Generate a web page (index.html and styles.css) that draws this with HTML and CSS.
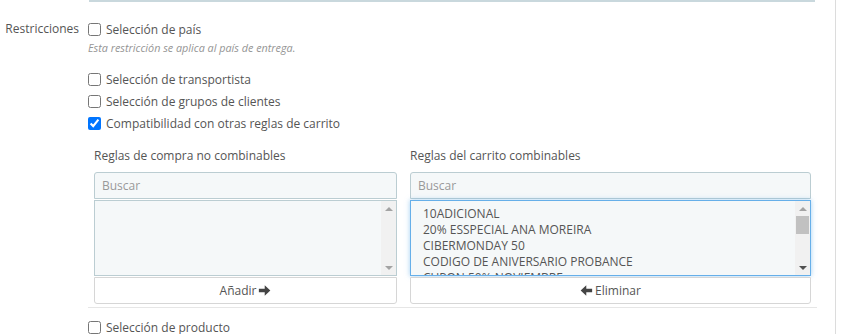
FILE: index.html
```html
<!DOCTYPE html>
<html lang="es">
<head>
  <meta charset="UTF-8" />
  <meta name="viewport" content="width=device-width, initial-scale=1.0" />
  <title>Restricciones</title>
  <link rel="stylesheet" href="styles.css">
</head>
<body>
  <div class="panel">
    <div class="top-rule"></div>

    <div class="form-group">
      <label class="control-label">Restricciones</label>
      <div class="controls">
        <label class="check"><input type="checkbox"> Selección de país</label>
        <p class="help">Esta restricción se aplica al país de entrega.</p>

        <label class="check first"><input type="checkbox"> Selección de transportista</label>
        <label class="check"><input type="checkbox"> Selección de grupos de clientes</label>
        <label class="check"><input type="checkbox" checked> Compatibilidad con otras reglas de carrito</label>

        <div class="rules">
          <div class="rule-col left">
            <div class="col-title">Reglas de compra no combinables</div>
            <input type="text" class="search" placeholder="Buscar">
            <div class="listbox">
              <div class="items"></div>
              <div class="scrollbar">
                <span class="arrow up"></span>
                <span class="track"></span>
                <span class="arrow down"></span>
              </div>
            </div>
            <button class="move">Añadir
              <svg class="ico" viewBox="0 0 12 12" width="13" height="13"><path d="M0.8 4.4h5.4V1.2L11.4 6 6.2 10.8V7.6H0.8z"/></svg>
            </button>
          </div>

          <div class="rule-col right">
            <div class="col-title">Reglas del carrito combinables</div>
            <input type="text" class="search" placeholder="Buscar">
            <div class="listbox focused">
              <div class="items">
                <div>10ADICIONAL</div>
                <div>20% ESSPECIAL ANA MOREIRA</div>
                <div>CIBERMONDAY 50</div>
                <div>CODIGO DE ANIVERSARIO PROBANCE</div>
                <div>CUPON 50% NOVIEMBRE</div>
              </div>
              <div class="scrollbar">
                <span class="arrow up"></span>
                <span class="track"><span class="thumb"></span></span>
                <span class="arrow down dark"></span>
              </div>
            </div>
            <button class="move">
              <svg class="ico" viewBox="0 0 12 12" width="13" height="13"><path d="M11.2 4.4H5.8V1.2L0.6 6 5.8 10.8V7.6H11.2z"/></svg>
              Eliminar</button>
          </div>
        </div>

        <label class="check product"><input type="checkbox"> Selección de producto</label>
      </div>
    </div>
  </div>
</body>
</html>
```

FILE: styles.css
```css
body {
  margin: 0;
  font-family: "Open Sans", "Noto Sans", sans-serif;
  font-size: 12px;
  color: #555;
  background: #fff;
}
.panel {
  width: 835px;
  height: 334px;
  border-right: 1px solid #dcdcdc;
  overflow: hidden;
}
.top-rule {
  margin-left: 89px;
  width: 726px;
  height: 2px;
  background: #c9d8dd;
}
.form-group {
  display: flex;
  padding-top: 16px;
}
.control-label {
  width: 79px;
  padding-right: 9px;
  text-align: right;
  font-size: 12px;
  line-height: 22px;
  flex: none;
}
.controls {
  width: 729px;
}
.check {
  display: flex;
  align-items: center;
  height: 22px;
  gap: 5px;
  cursor: pointer;
}
.check input {
  margin: 0;
  width: 13px;
  height: 13px;
}
.check.first {
  margin-top: 12px;
}
.help {
  margin: 0;
  line-height: 16px;
  font-size: 10.8px;
  font-style: italic;
  color: #959595;
}
.rules {
  display: grid;
  grid-template-columns: 303px 401px;
  column-gap: 13px;
  padding: 13px 0 3px 6px;
  border-bottom: 1px solid #e6e6e6;
}
.col-title {
  line-height: 18px;
  margin-bottom: 7px;
}
.search {
  display: block;
  width: 100%;
  height: 27px;
  box-sizing: border-box;
  margin: 0;
  padding: 0 7px;
  border: 1px solid #bbcdd2;
  border-radius: 3px 3px 0 0;
  background: #f5f8f9;
  font-family: inherit;
  font-size: 12px;
  color: #555;
}
.search::placeholder {
  color: #999;
}
.listbox {
  display: flex;
  height: 76px;
  margin-top: 1px;
  box-sizing: border-box;
  border: 1px solid #bbcdd2;
  background: #f5f8f9;
  overflow: hidden;
}
.listbox.focused {
  border-color: #66afe9;
  box-shadow: 0 0 5px rgba(102, 175, 233, 0.6);
}
.items {
  flex: 1;
  padding: 5px 12px;
  line-height: 16px;
  overflow: hidden;
  white-space: nowrap;
}
.scrollbar {
  width: 15px;
  flex: none;
  display: flex;
  flex-direction: column;
  background: #f1f1f1;
}
.arrow {
  height: 15px;
  display: flex;
  align-items: center;
  justify-content: center;
}
.arrow::before {
  content: "";
  border-left: 4px solid transparent;
  border-right: 4px solid transparent;
}
.arrow.up::before {
  border-bottom: 4px solid #a3a3a3;
}
.arrow.down::before {
  border-top: 4px solid #a3a3a3;
}
.arrow.down.dark::before {
  border-top-color: #505050;
}
.track {
  flex: 1;
  padding: 0 1px;
}
.thumb {
  display: block;
  height: 18px;
  background: #c1c1c1;
}
.move {
  display: flex;
  align-items: center;
  justify-content: center;
  gap: 2px;
  width: 100%;
  height: 27px;
  margin-top: 1px;
  border: 1px solid #d6d6d6;
  border-radius: 0 0 3px 3px;
  background: #fff;
  font-family: inherit;
  font-size: 12px;
  color: #555;
  cursor: pointer;
}
.ico {
  fill: #444;
}
.check.product {
  margin-top: 8px;
}
```
